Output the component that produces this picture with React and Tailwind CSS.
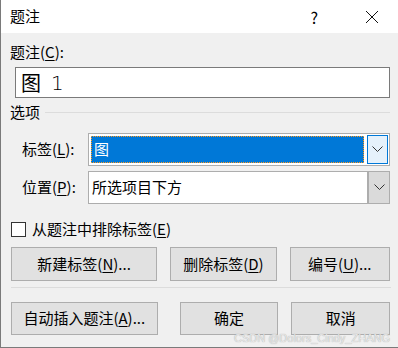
import React from "react";

const F = { fontFamily: '"Microsoft YaHei UI","Noto Sans CJK SC","Noto Sans",sans-serif' };

function Btn({ children, w, h = "h-[34px]" }) {
  return (
    <div
      className={`flex items-center justify-center ${h} bg-[#e1e1e1] border border-[#adadad] text-[15px] text-black ${w}`}
    >
      {children}
    </div>
  );
}

function Chevron() {
  return (
    <svg width="11" height="7" viewBox="0 0 11 7">
      <path d="M0.5 0.5 L5.5 5.5 L10.5 0.5" fill="none" stroke="#333" strokeWidth="1" />
    </svg>
  );
}

export default function App() {
  return (
    <div
      className="relative w-[398px] h-[348px] bg-[#f0f0f0] border-l border-b border-[#7a7a7a] overflow-hidden text-black"
      style={F}
    >
      {/* title bar */}
      <div className="h-[33px] bg-white flex items-center">
        <span className="ml-[9px] text-[15px]">题注</span>
        <span className="ml-auto mr-[47px] text-[16px]">?</span>
        <svg width="14" height="14" viewBox="0 0 14 14" className="mr-[19px]">
          <path d="M1 1 L13 13 M13 1 L1 13" stroke="#111" strokeWidth="1" />
        </svg>
      </div>

      <div className="pl-[9px] pr-[8px]">
        <div className="mt-[9px] h-[20px] leading-[20px] text-[15px]">
          题注(<span className="underline underline-offset-2">C</span>):
        </div>
        <div className="mt-[5px] ml-[5px] h-[31px] bg-white border border-[#7a7a7a] flex items-center pl-[5px] text-[20px]">
          <span>图</span>
          <span className="ml-[10px]" style={{ fontFamily: '"DejaVu Sans","Noto Sans",sans-serif', fontWeight: 300 }}>1</span>
        </div>

        {/* group */}
        <div className="mt-[4px] flex items-center h-[20px]">
          <span className="text-[15px] leading-[20px]">选项</span>
          <div className="flex-1 ml-[5px] h-px bg-[#dcdcdc]" />
        </div>

        <div className="mt-[11px] flex items-center h-[33px]">
          <span className="ml-[12px] w-[66px] text-[15px]">
            标签(<span className="underline underline-offset-2">L</span>):
          </span>
          <div className="flex-1 h-[33px] bg-white border border-[#adadad] flex items-stretch p-[2px]">
            <div className="flex-1 bg-[#0078d7] border border-dotted border-[#ff9a1f] flex items-center pl-[2px] text-white text-[15px]">
              图
            </div>
            <div className="ml-[3px] w-[21px] -mt-[1px] -mb-[1px] -mr-[1px] bg-[#e5f1fb] border border-[#0078d7] flex items-center justify-center">
              <Chevron />
            </div>
          </div>
        </div>

        <div className="mt-[5px] flex items-center h-[33px]">
          <span className="ml-[12px] w-[66px] text-[15px]">
            位置(<span className="underline underline-offset-2">P</span>):
          </span>
          <div className="flex-1 h-[33px] bg-white border border-[#adadad] flex items-stretch">
            <div className="flex-1 flex items-center pl-[3px] text-[15px]">所选项目下方</div>
            <div className="w-[22px] bg-[#dadada] border-l-2 border-[#adadad] flex items-center justify-center">
              <Chevron />
            </div>
          </div>
        </div>

        {/* checkbox */}
        <div className="mt-[17px] flex items-center h-[16px]">
          <div className="ml-[1px] w-[15px] h-[15px] bg-white border border-[#333]" />
          <span className="ml-[6px] text-[15px]">
            从题注中排除标签(<span className="underline underline-offset-2">E</span>)
          </span>
        </div>

        <div className="mt-[10px] flex items-center">
          <Btn w="w-[147px] ml-[1px]">
            新建标签(<span className="underline underline-offset-2">N</span>)...
          </Btn>
          <Btn w="w-[107px] ml-[13px]">
            删除标签(<span className="underline underline-offset-2">D</span>)
          </Btn>
          <Btn w="w-[101px] ml-[13px]">
            编号(<span className="underline underline-offset-2">U</span>)...
          </Btn>
        </div>

        <div className="mt-[6px] ml-[1px] h-px bg-[#dcdcdc] w-[380px]" />

        <div className="mt-[14px] flex items-center">
          <Btn w="w-[147px] ml-[1px]" h="h-[33px]">
            自动插入题注(<span className="underline underline-offset-2">A</span>)...
          </Btn>
          <Btn w="w-[99px] ml-[22px]" h="h-[33px]">确定</Btn>
          <Btn w="w-[99px] ml-[13px]" h="h-[33px]">取消</Btn>
        </div>
      </div>

      <div
        className="absolute right-[8px] bottom-[3px] text-[11px] leading-[12px] text-[#e8e8e8]"
        style={{ fontFamily: '"Liberation Sans",sans-serif', textShadow: "0 0 1px #999" }}
      >
        CSDN @Dolors_Cindy_ZHANG
      </div>
    </div>
  );
}
